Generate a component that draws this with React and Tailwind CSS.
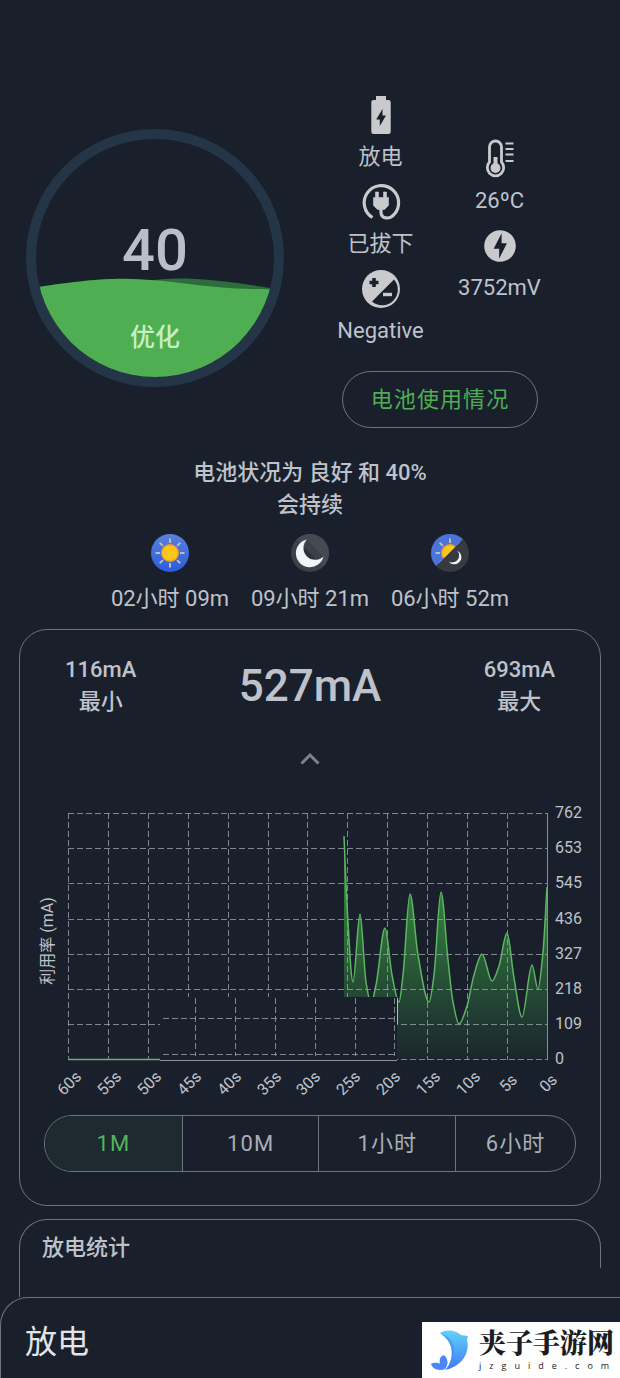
import { MdOfflineBolt } from "react-icons/md";

const CURVE = [
  [344, 836], [347, 905], [353, 982], [360, 914], [366, 982], [371, 1003], [376, 985], [385, 928],
  [392, 975], [399, 1002], [403, 975], [410, 894], [418, 955], [429, 1002], [434, 975], [441, 892],
  [448, 960], [453, 1002], [459, 1024], [467, 1006], [474, 975], [482, 954], [492, 981], [499, 966],
  [507, 933], [514, 978], [522, 1017], [532, 965], [538, 989], [543, 952], [547, 887],
];

// Monotone cubic interpolation through the samples.
function smoothPath(points) {
  const n = points.length;
  const slopes = [];
  for (let i = 0; i < n - 1; i++) {
    slopes.push((points[i + 1][1] - points[i][1]) / (points[i + 1][0] - points[i][0]));
  }
  const tangents = points.map((_, i) => {
    if (i === 0) return slopes[0];
    if (i === n - 1) return slopes[n - 2];
    const a = slopes[i - 1];
    const b = slopes[i];
    return a * b <= 0 ? 0 : (2 * a * b) / (a + b);
  });
  let d = `M${points[0][0]} ${points[0][1]}`;
  for (let i = 0; i < n - 1; i++) {
    const [x0, y0] = points[i];
    const [x1, y1] = points[i + 1];
    const h = (x1 - x0) / 3;
    d += `C${x0 + h} ${y0 + h * tangents[i]} ${x1 - h} ${y1 - h * tangents[i + 1]} ${x1} ${y1}`;
  }
  return d;
}

const LINE = smoothPath(CURVE);
const Y_TICKS = [762, 653, 545, 436, 327, 218, 109, 0];
const X_TICKS = ["60s", "55s", "50s", "45s", "40s", "35s", "30s", "25s", "20s", "15s", "10s", "5s", "0s"];
const FONT = "font-['Roboto','Noto_Sans_CJK_SC',sans-serif]";

function Gauge() {
  return (
    <svg viewBox="0 0 258 258" className="w-[258px]" role="img" aria-label="40 优化">
      <defs>
        <clipPath id="bowl">
          <circle cx="129" cy="129" r="119" />
        </clipPath>
      </defs>
      <circle cx="129" cy="129" r="124" fill="none" stroke="#243547" strokeWidth="10" />
      <g clipPath="url(#bowl)">
        <path d="M120 152C150 147 185 149 250 160V170H120Z" fill="#2c6c3d" />
        <path d="M0 160C50 152 80 149 105 150C155 151 185 162 258 160V258H0Z" fill="#4eae51" />
      </g>
      <text x="129" y="141" textAnchor="middle" className={`${FONT} text-[58px] font-medium`} fill="#b9bec8">
        40
      </text>
      <text x="129" y="217" textAnchor="middle" className={`${FONT} text-[25px] font-medium`} fill="#c5efc3">
        优化
      </text>
    </svg>
  );
}

function BatteryIcon() {
  return (
    <svg viewBox="0 0 46 46" className="size-[46px]" aria-hidden="true">
      <path
        d="M18 4H28V8H30.500A2.200 2.200 0 0 1 32.700 10.200V39.800A2.200 2.200 0 0 1 30.500 42H15.500A2.200 2.200 0 0 1 13.300 39.800V10.200A2.200 2.200 0 0 1 15.500 8H18Z"
        fill="currentColor"
      />
      <path d="M24.500 17V23.500H28L21.800 34V27.500H18.200Z" fill="#19202c" />
    </svg>
  );
}

function PlugIcon() {
  return (
    <svg viewBox="0 0 46 46" className="size-[46px]" fill="none" aria-hidden="true">
      <path
        d="M14.500 38.500A17.200 17.200 0 1 1 36 35.500C32 40.500 23 40.500 23 33V30"
        stroke="currentColor"
        strokeWidth="3.200"
      />
      <path
        d="M17.500 13h3v5.500h5v-5.500h3v5.500h2v8l-4 4h-7l-4-4v-8h2z"
        fill="currentColor"
        stroke="currentColor"
        strokeWidth="0.6"
        strokeLinejoin="round"
      />
    </svg>
  );
}

function PolarityIcon() {
  return (
    <svg viewBox="0 0 46 46" className="size-[46px]" aria-hidden="true">
      <circle cx="23" cy="23" r="19" fill="currentColor" />
      <path d="M36 13.500A15.600 15.600 0 0 1 14 35.500Z" fill="#19202c" />
      <path d="M16 12v9M11.500 16.500h9" stroke="#19202c" strokeWidth="3.600" />
      <path d="M25 28.500h9" stroke="currentColor" strokeWidth="3.400" />
    </svg>
  );
}

function ThermometerIcon() {
  return (
    <svg viewBox="0 0 46 46" className="size-[46px]" fill="none" stroke="currentColor" aria-hidden="true">
      <path d="M12.500 26V11a6 6 0 0 1 12 0v15a8.200 8.200 0 1 1-12 0Z" strokeWidth="2.800" />
      <circle cx="18.500" cy="32" r="5" fill="currentColor" stroke="none" />
      <path d="M18.500 21v10" strokeWidth="4" />
      <path d="M28.500 7.500h8M28.500 13h8M28.500 18.500h8M28.500 25h8" strokeWidth="2.200" />
    </svg>
  );
}

function Reading({ icon, label }) {
  return (
    <div className="flex flex-col items-center">
      <div className="flex size-[46px] items-center justify-center text-[#c9cacc]">{icon}</div>
      <span className="whitespace-nowrap text-[22px] leading-[38px]">{label}</span>
    </div>
  );
}

function SunArt() {
  return (
    <>
      <g stroke="#b9bfae" strokeWidth="2">
        <path d="M19 4.500v4.500M19 29v4.500M4.500 19H9M29 19h4.500M8.700 8.700l3.200 3.200M26.100 26.100l3.200 3.200M8.700 29.300l3.200-3.200M26.100 11.900l3.200-3.200" />
      </g>
      <circle cx="19" cy="19" r="9" fill="#f09d2c" />
      <circle cx="19" cy="19" r="7.600" fill="#fbc81a" />
    </>
  );
}

function SunIcon() {
  return (
    <svg viewBox="0 0 38 38" className="size-[38px]" aria-hidden="true">
      <defs>
        <linearGradient id="sky" x1="0" y1="0" x2="0" y2="1">
          <stop offset="0" stopColor="#5b80dc" />
          <stop offset="1" stopColor="#2b5be0" />
        </linearGradient>
      </defs>
      <circle cx="19" cy="19" r="19" fill="url(#sky)" />
      <SunArt />
    </svg>
  );
}

function MoonIcon() {
  return (
    <svg viewBox="0 0 38 38" className="size-[38px]" aria-hidden="true">
      <circle cx="19" cy="19" r="19" fill="#3c4149" />
      <path d="M16 5.500L32.500 23A15 15 0 0 1 12 20Z" fill="#2e3239" />
      <path d="M5.500 5.500A19 19 0 0 1 32.500 32.500Z" fill="#575c64" opacity=".35" />
      <path d="M16 5.500A14 14 0 1 0 32.500 22.500A11.500 11.500 0 0 1 16 5.500Z" fill="#f1f5f8" />
    </svg>
  );
}

function DayNightIcon() {
  return (
    <svg viewBox="0 0 38 38" className="size-[38px]" aria-hidden="true">
      <defs>
        <clipPath id="day">
          <path d="M-2 0H37L-2 39Z" />
        </clipPath>
      </defs>
      <circle cx="19" cy="19" r="19" fill="#373a40" />
      <g clipPath="url(#day)">
        <circle cx="19" cy="19" r="19" fill="#4b73db" />
        <SunArt />
      </g>
      <path d="M26 16.500A7.200 7.200 0 1 1 17.500 27.500A7 7 0 0 0 26 16.500Z" fill="#f1f5f8" />
    </svg>
  );
}

function Estimate({ icon, label }) {
  return (
    <div className="flex w-[140px] flex-col items-center gap-[10px]">
      {icon}
      <span className="whitespace-nowrap text-[22px] leading-[34px]">{label}</span>
    </div>
  );
}

function Chart() {
  return (
    <svg viewBox="20 795 580 305" className="mt-6 block w-full" role="img" aria-label="利用率 (mA)">
      <defs>
        <linearGradient id="area" gradientUnits="userSpaceOnUse" x1="0" y1="836" x2="0" y2="1060">
          <stop offset="0" stopColor="#3f9f45" stopOpacity=".9" />
          <stop offset=".45" stopColor="#34833d" stopOpacity=".75" />
          <stop offset="1" stopColor="#2d7a45" stopOpacity=".06" />
        </linearGradient>
        <clipPath id="plot">
          <path d="M60 805H550V1062H397V997H160V1062H60Z" />
        </clipPath>
      </defs>
      <g clipPath="url(#plot)">
        <path d={`${LINE}V1060H344Z`} fill="url(#area)" />
        <g stroke="#a3a7ae" strokeOpacity=".75" strokeDasharray="6 3" fill="none">
          {Y_TICKS.map((t, i) => (
            <path key={t} d={`M68 ${813.5 + Math.round(i * 35.2)}H547`} />
          ))}
          {X_TICKS.slice(0, 12).map((t, i) => (
            <path key={t} d={`M${68.5 + Math.round(i * 39.9)} 813V1060`} />
          ))}
        </g>
        <path d={LINE} fill="none" stroke="#5cb562" strokeWidth="1.5" />
      </g>
      <g stroke="#9a9fa6" strokeOpacity=".8" strokeDasharray="6 3" fill="none">
        <path d="M163 1018.500H397M163 1054.500H397" />
        <path d="M195.500 998V1056M235.500 998V1056M275.500 998V1056M315.500 998V1056M355.500 998V1056M394.500 998V1056" />
      </g>
      <path d="M160 1060.500H397M547.500 813V1060" stroke="#8a8f97" />
      <path d="M397.500 998V1024" stroke="#b5b8bd" />
      <path d="M68 1059.500H160" stroke="#71a878" strokeWidth="1.500" />
      <g className={`${FONT} text-[16px]`} fill="#bfc2c9">
        {Y_TICKS.map((t, i) => (
          <text key={t} x="555" y={818 + Math.round(i * 35.2)}>
            {t}
          </text>
        ))}
        {X_TICKS.map((t, i) => (
          <text
            key={t}
            textAnchor="middle"
            transform={`translate(${73 + Math.round(i * 39.9)} 1087) rotate(-45)`}
          >
            {t}
          </text>
        ))}
        <text textAnchor="middle" transform="translate(53 941) rotate(-90)">
          利用率 (mA)
        </text>
      </g>
    </svg>
  );
}

function Extreme({ value, label }) {
  return (
    <div className="text-center text-[22px] font-medium leading-8">
      <div>{value}</div>
      <div>{label}</div>
    </div>
  );
}

const RANGES = ["1M", "10M", "1小时", "6小时"];

function RangePicker() {
  return (
    <div className="mx-6 mt-[15px] grid h-[57px] grid-cols-[138fr_137fr_137fr_119fr] divide-x divide-[#6f747b] overflow-hidden rounded-[28px] border border-[#6f747b]">
      {RANGES.map((r, i) => (
        <button
          key={r}
          type="button"
          aria-pressed={i === 0}
          className={
            i === 0
              ? "bg-[#1d2a2f] text-[22px] tracking-wider text-[#55b35a]"
              : "text-[22px] tracking-wider text-[#a9adb5]"
          }
        >
          {r}
        </button>
      ))}
    </div>
  );
}

function Watermark() {
  return (
    <div className="absolute bottom-0 right-0 flex h-14 w-[198px] items-center gap-[10px] bg-white pl-[9px] text-[#1c1c1e]">
      <svg viewBox="0 0 38 40" className="h-10 w-[38px] shrink-0" aria-hidden="true">
        <defs>
          <linearGradient id="fin" x1="0" y1="0" x2="0" y2="1">
            <stop offset="0" stopColor="#62d2fb" />
            <stop offset="1" stopColor="#3d7bf5" />
          </linearGradient>
        </defs>
        <path d="M9 3C15-1 25 0 30 5L37 6L36 10C39 22 32 36 14 40C20 34 22 25 20 17C18 10 14 7 9 3Z" fill="url(#fin)" />
        <path d="M9 3C18 6 23 12 23 20C23 29 20 36 14 40C20 34 22 25 20 17C18 10 14 7 9 3Z" fill="#3f86f6" opacity=".55" />
        <path d="M0 34C4 32 8 33 9 34C8 30 9 26 13 25C17 29 18 34 14 39C9 41 2 40 0 34Z" fill="#4a86f7" />
      </svg>
      <div className="flex flex-col">
        <span className="whitespace-nowrap font-['Liberation_Serif','Noto_Serif_CJK_SC','Noto_Sans_CJK_SC',serif] text-[27px] font-black leading-8">
          夹子手游网
        </span>
        <span className="whitespace-nowrap font-['Open_Sans',sans-serif] text-[9px] leading-3 tracking-[8px]">
          jzguide.com
        </span>
      </div>
    </div>
  );
}

export default function App() {
  return (
    <div
      lang="zh-CN"
      className="flex min-h-screen flex-col bg-[#19202c] font-['Roboto','Noto_Sans_CJK_SC',sans-serif] text-[#bfc2ca]"
    >
      <section className="grid grid-cols-2 items-start pt-[92px]">
        <div className="flex justify-center pt-[37px]">
          <Gauge />
        </div>
        <div className="flex flex-col items-center pr-[50px]">
          <div className="grid grid-cols-[119px_119px] items-center">
            <div className="flex flex-col gap-[3px]">
              <Reading icon={<BatteryIcon />} label="放电" />
              <Reading icon={<PlugIcon />} label="已拔下" />
              <Reading icon={<PolarityIcon />} label="Negative" />
            </div>
            <div className="flex flex-col gap-[3px]">
              <Reading icon={<ThermometerIcon />} label="26ºC" />
              <Reading icon={<MdOfflineBolt className="size-[38px]" />} label="3752mV" />
            </div>
          </div>
          <button
            type="button"
            className="mt-[21px] h-[57px] rounded-full border border-[#6f747b] px-7 text-[22px] tracking-wider text-[#4fae54]"
          >
            电池使用情况
          </button>
        </div>
      </section>

      <h1 className="mt-[29px] text-center text-[22px] font-medium leading-8">
        电池状况为 良好 和 40%
        <br />
        会持续
      </h1>
      <div className="mt-[13px] flex justify-center">
        <Estimate icon={<SunIcon />} label="02小时 09m" />
        <Estimate icon={<MoonIcon />} label="09小时 21m" />
        <Estimate icon={<DayNightIcon />} label="06小时 52m" />
      </div>

      <section className="mx-[19px] mt-[13px] rounded-[28px] border border-[#6f747b] bg-[#1a202b] pb-[33px] pt-6">
        <div className="flex items-center justify-between px-[45px]">
          <Extreme value="116mA" label="最小" />
          <div className="text-[44px] font-medium leading-[64px]">527mA</div>
          <Extreme value="693mA" label="最大" />
        </div>
        <button type="button" aria-label="收起" className="mx-auto mt-[29px] block size-6 text-[#7d8289]">
          <svg viewBox="0 0 24 24" fill="none" stroke="currentColor" strokeWidth="3" aria-hidden="true">
            <path d="M3.500 16.500L12 8L20.500 16.500" />
          </svg>
        </button>
        <Chart />
        <RangePicker />
      </section>

      <section className="mx-[19px] mt-[13px]">
        <div className="h-[49px] rounded-t-[28px] border-x border-t border-[#6f747b] pl-[22px] pt-3">
          <h2 className="text-[22px] font-medium leading-8">放电统计</h2>
        </div>
        <div className="h-[29px] border-l border-[#6f747b]" />
      </section>

      <section className="relative flex h-[81px] grow items-center rounded-tl-[28px] border-l border-t border-[#6f747b] bg-[#1a202b] pl-6 pt-2">
        <h2 className="text-[32px] leading-10 text-[#e2e4e9]">放电</h2>
        <Watermark />
      </section>
    </div>
  );
}
